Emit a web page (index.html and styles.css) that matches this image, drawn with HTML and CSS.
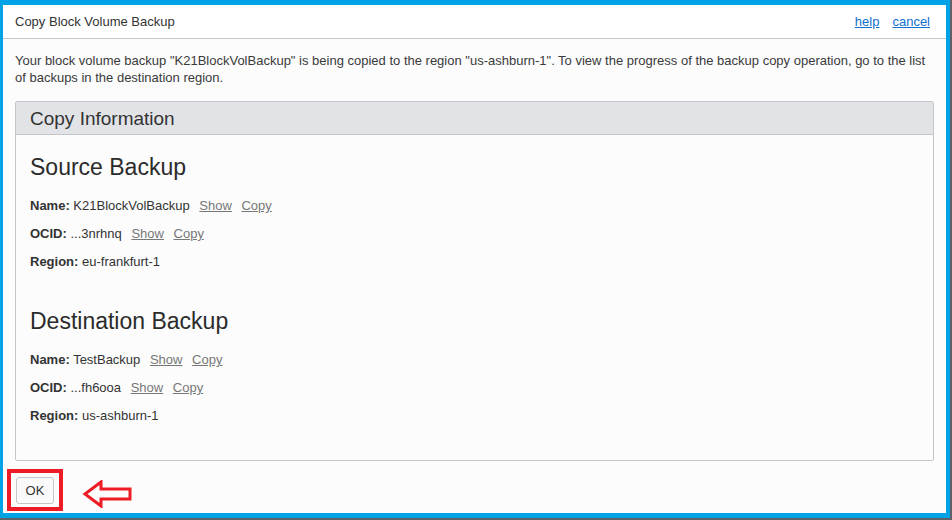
FILE: index.html
```html
<!DOCTYPE html>
<html lang="en">
<head>
    <meta charset="UTF-8">
    <meta name="viewport" content="width=device-width, initial-scale=1.0">
    <title>Copy Block Volume Backup</title>
    <link rel="stylesheet" href="styles.css">
</head>
<body>
    <div class="frame">
        <div class="dialog-header">
            <span class="dialog-title">Copy Block Volume Backup</span>
            <div class="header-links">
                <a href="#">help</a>
                <a href="#">cancel</a>
            </div>
        </div>

        <div class="dialog-body">
            <p class="intro">Your block volume backup "K21BlockVolBackup" is being copied to the region "us-ashburn-1". To view the progress of the backup copy operation, go to the list of backups in the destination region.</p>

            <div class="panel">
                <div class="panel-header">Copy Information</div>
                <div class="panel-body">
                    <h2>Source Backup</h2>
                    <div class="field"><strong>Name:</strong> K21BlockVolBackup <a href="#">Show</a> <a href="#">Copy</a></div>
                    <div class="field"><strong>OCID:</strong> ...3nrhnq <a href="#">Show</a> <a href="#">Copy</a></div>
                    <div class="field"><strong>Region:</strong> eu-frankfurt-1</div>

                    <h2 class="second">Destination Backup</h2>
                    <div class="field"><strong>Name:</strong> TestBackup <a href="#">Show</a> <a href="#">Copy</a></div>
                    <div class="field"><strong>OCID:</strong> ...fh6ooa <a href="#">Show</a> <a href="#">Copy</a></div>
                    <div class="field"><strong>Region:</strong> us-ashburn-1</div>
                </div>
            </div>
        </div>

        <div class="dialog-footer">
            <button class="ok-button">OK</button>
        </div>

        <!-- annotation drawn over the screenshot -->
        <div class="mark-box"></div>
        <svg class="mark-arrow" width="52" height="28" viewBox="0 0 52 28">
            <path d="M3 14 L19 2 L19 9 L48 9 L48 19 L19 19 L19 26 Z" fill="none" stroke="#ed1c24" stroke-width="3" stroke-linejoin="miter"/>
        </svg>
    </div>
</body>
</html>
```

FILE: styles.css
```css
html, body {
    margin: 0;
    padding: 0;
}
body {
    width: 952px;
    height: 520px;
    background-color: #5f6166;
    font-family: "Liberation Sans", Arial, sans-serif;
    font-size: 13px;
    color: #333;
    overflow: hidden;
}
.frame {
    position: relative;
    box-sizing: border-box;
    width: 950px;
    height: 518px;
    border-top: 5px solid #00a3e6;
    border-left: 3px solid #00a3e6;
    border-right: 4px solid #00a3e6;
    border-bottom: 5px solid #00a3e6;
    background-color: #fcfcfc;
}
.dialog-header {
    display: flex;
    align-items: center;
    justify-content: space-between;
    height: 33px;
    padding: 0 16px 0 12px;
    background-color: #fff;
    border-bottom: 1px solid #c4c6ca;
}
.dialog-title {
    color: #333;
}
.header-links {
    display: flex;
    gap: 13px;
}
.header-links a {
    color: #1170cf;
    text-decoration: underline;
}
.dialog-body {
    padding: 13px 12px 0 12px;
}
.intro {
    margin: 0 0 15px 0;
    line-height: 17px;
    color: #3a3a3a;
}
.panel {
    border: 1px solid #c4c6ca;
    border-radius: 2px;
    height: 360px;
    box-sizing: border-box;
}
.panel-header {
    height: 32px;
    line-height: 33px;
    padding-left: 14px;
    font-size: 19px;
    color: #333;
    background-color: #e2e3e7;
    border-bottom: 1px solid #c4c6ca;
}
.panel-body {
    padding: 18px 14px 0 14px;
}
.panel-body h2 {
    margin: 0 0 17px 0;
    font-size: 23px;
    font-weight: normal;
    line-height: 28px;
    color: #2b2b2b;
}
.panel-body h2.second {
    margin-top: 25px;
}
.field {
    height: 28px;
    line-height: 16px;
    color: #333;
}
.field strong {
    color: #333;
}
.field a {
    color: #777;
    text-decoration: underline;
    margin-left: 6px;
}
.dialog-footer {
    padding: 16px 13px 0 13px;
}
.ok-button {
    box-sizing: border-box;
    width: 38px;
    height: 27px;
    padding: 0;
    font-family: "Liberation Sans", Arial, sans-serif;
    font-size: 13px;
    color: #333;
    background-color: #fafafa;
    border: 1px solid #c6c6c6;
    border-radius: 3px;
}
.mark-box {
    position: absolute;
    left: 4px;
    top: 464px;
    width: 48px;
    height: 34px;
    border: 4px solid #ed1c24;
}
.mark-arrow {
    position: absolute;
    left: 79px;
    top: 475px;
}
```
